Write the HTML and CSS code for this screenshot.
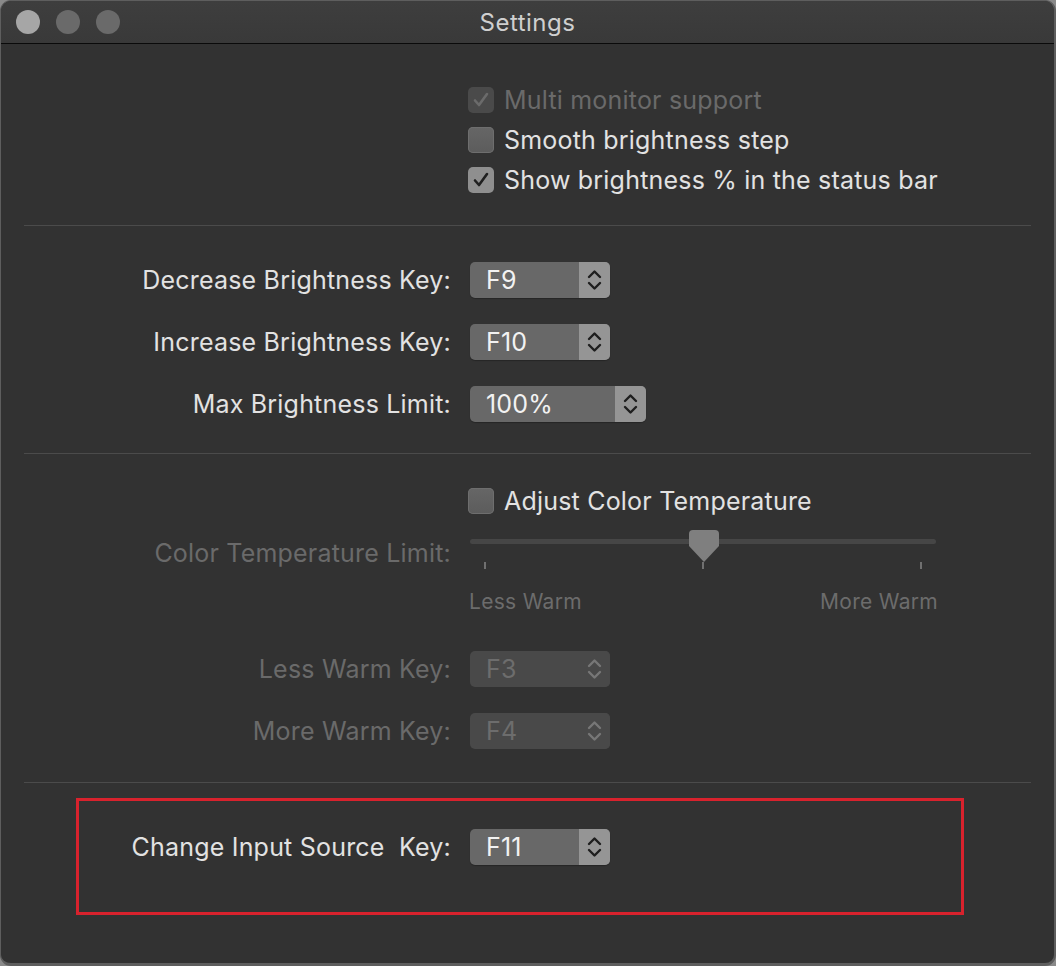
FILE: index.html
```html
<!DOCTYPE html>
<html>
<head>
<meta charset="utf-8">
<link rel="stylesheet" href="styles.css">
</head>
<body>
<div class="window">
  <div class="titlebar">
    <div class="lights">
      <span class="light light-close"></span>
      <span class="light"></span>
      <span class="light"></span>
    </div>
    <div class="title">Settings</div>
  </div>

  <div class="section sec-checks">
    <div class="check-row disabled"><span class="cb cb-on"><svg viewBox="0 0 26 26"><path d="M7 13.5l4 4.5 8-11"/></svg></span><span class="cb-label">Multi monitor support</span></div>
    <div class="check-row"><span class="cb"></span><span class="cb-label">Smooth brightness step</span></div>
    <div class="check-row"><span class="cb cb-on"><svg viewBox="0 0 26 26"><path d="M7 13.5l4 4.5 8-11"/></svg></span><span class="cb-label">Show brightness % in the status bar</span></div>
  </div>
  <div class="sep"></div>

  <div class="section sec-keys">
    <div class="row"><span class="label">Decrease Brightness Key:</span>
      <span class="popup"><span class="popup-val">F9</span><span class="popup-arrows"><svg viewBox="0 0 31 36"><path d="M10 15l5.5-5.5 5.5 5.5M10 21l5.5 5.5 5.5-5.5"/></svg></span></span></div>
    <div class="row"><span class="label">Increase Brightness Key:</span>
      <span class="popup"><span class="popup-val">F10</span><span class="popup-arrows"><svg viewBox="0 0 31 36"><path d="M10 15l5.5-5.5 5.5 5.5M10 21l5.5 5.5 5.5-5.5"/></svg></span></span></div>
    <div class="row"><span class="label">Max Brightness Limit:</span>
      <span class="popup popup-wide"><span class="popup-val">100%</span><span class="popup-arrows"><svg viewBox="0 0 31 36"><path d="M10 15l5.5-5.5 5.5 5.5M10 21l5.5 5.5 5.5-5.5"/></svg></span></span></div>
  </div>
  <div class="sep"></div>

  <div class="section sec-temp">
    <div class="check-row"><span class="cb"></span><span class="cb-label">Adjust Color Temperature</span></div>
    <div class="slider-row">
      <span class="label label-dim slider-label">Color Temperature Limit:</span>
      <div class="slider">
        <div class="track"></div>
        <svg class="thumb" viewBox="0 0 30 32"><path d="M4 0h22a4 4 0 0 1 4 4v12l-15 16-15-16v-12a4 4 0 0 1 4-4z"/></svg>
        <div class="ticks"><span class="tick"></span><span class="tick"></span><span class="tick"></span></div>
        <div class="slider-caps"><span>Less Warm</span><span>More Warm</span></div>
      </div>
    </div>
    <div class="row"><span class="label label-dim">Less Warm Key:</span>
      <span class="popup popup-off"><span class="popup-val">F3</span><span class="popup-arrows"><svg viewBox="0 0 31 36"><path d="M10 15l5.5-5.5 5.5 5.5M10 21l5.5 5.5 5.5-5.5"/></svg></span></span></div>
    <div class="row"><span class="label label-dim">More Warm Key:</span>
      <span class="popup popup-off"><span class="popup-val">F4</span><span class="popup-arrows"><svg viewBox="0 0 31 36"><path d="M10 15l5.5-5.5 5.5 5.5M10 21l5.5 5.5 5.5-5.5"/></svg></span></span></div>
  </div>
  <div class="sep"></div>

  <div class="section sec-input">
    <div class="highlight">
      <div class="row row-hl"><span class="label label-hl">Change Input Source&nbsp; Key:</span>
        <span class="popup"><span class="popup-val">F11</span><span class="popup-arrows"><svg viewBox="0 0 31 36"><path d="M10 15l5.5-5.5 5.5 5.5M10 21l5.5 5.5 5.5-5.5"/></svg></span></span></div>
    </div>
  </div>
</div>
</body>
</html>
```

FILE: styles.css
```css
* { box-sizing: border-box; }
html, body {
  margin: 0;
  padding: 0;
  background: #8a8a8a;
}
body {
  width: 1056px;
  height: 966px;
  overflow: hidden;
  font-family: "Inter", "Liberation Sans", sans-serif;
  --col: 451px;
  --gap: 19px;
}
.window {
  width: 1056px;
  height: 966px;
  background: #323232;
  border: 1px solid #5e5e5e;
  border-right-width: 2px;
  border-bottom-width: 3px;
  border-radius: 11px;
  overflow: hidden;
  display: flex;
  flex-direction: column;
}
.titlebar {
  height: 43px;
  flex: none;
  position: relative;
  background: linear-gradient(#3e3e3e, #393939);
  border-bottom: 1px solid #0a0a0a;
  display: flex;
  align-items: center;
  justify-content: center;
}
.lights {
  position: absolute;
  left: 15px;
  top: 9px;
  display: flex;
  gap: 16px;
}
.light {
  width: 24px;
  height: 24px;
  border-radius: 50%;
  background: #6a6a6a;
}
.light-close { background: #a6a6a6; }
.title {
  color: #cfcfcf;
  font-size: 24px;
  letter-spacing: 0.5px;
  padding-top: 1px;
}
.sep {
  height: 1px;
  flex: none;
  margin: 0 23px 0 23px;
  background: #4b4b4b;
}
.section { flex: none; }
.sec-checks { padding: 36px 0 25px 0; }
.sec-keys { padding: 23px 0 18px 0; }
.sec-temp { padding: 27px 0 20px 0; }
.sec-input { padding: 15px 0 0 0; flex: 1; }

.check-row {
  height: 40px;
  display: flex;
  align-items: center;
  padding-left: 467px;
  gap: 10px;
  color: #e2e2e2;
  font-size: 25px;
  letter-spacing: 0.2px;
}
.cb {
  width: 26px;
  height: 26px;
  border-radius: 5px;
  background: linear-gradient(#666, #5c5c5c);
  box-shadow: inset 0 0 0 1px #6e6e6e;
  display: flex;
  flex: none;
}
.cb svg { width: 26px; height: 26px; }
.cb svg path { fill: none; stroke: #202020; stroke-width: 2.6; stroke-linecap: round; stroke-linejoin: round; }
.cb-on { background: #8f8f8f; box-shadow: none; }
.disabled { color: #6a6a6a; }
.disabled .cb-on { background: #4a4a4a; }
.disabled .cb svg path { stroke: #6b6b6b; }

.row {
  height: 62px;
  display: flex;
  align-items: center;
  gap: var(--gap);
}
.label {
  width: calc(var(--col) - 1px);
  flex: none;
  text-align: right;
  font-size: 25px;
  letter-spacing: 0.2px;
  color: #e2e2e2;
}
.label-dim { color: #6a6a6a; }
.popup {
  width: 140px;
  height: 36px;
  border-radius: 5px;
  background: #686868;
  display: flex;
  overflow: hidden;
  box-shadow: 0 1px 1px rgba(0,0,0,0.25);
}
.popup-wide { width: 176px; }
.popup-val {
  flex: 1;
  padding-left: 16px;
  font-size: 25px;
  letter-spacing: 0.2px;
  line-height: 36px;
  color: #f2f2f2;
}
.popup-arrows {
  width: 31px;
  flex: none;
  background: #959595;
  display: flex;
}
.popup-arrows svg { width: 31px; height: 36px; }
.popup-arrows path { fill: none; stroke: #1e1e1e; stroke-width: 2.4; stroke-linecap: round; stroke-linejoin: round; }
.popup-off { background: #494949; box-shadow: none; }
.popup-off .popup-val { color: #6d6d6d; }
.popup-off .popup-arrows { background: #494949; }
.popup-off .popup-arrows path { stroke: #777; }

.slider-row {
  height: 117px;
  display: flex;
  align-items: flex-start;
  gap: var(--gap);
}
.slider-label { padding-top: 17px; }
.slider {
  width: 467px;
  position: relative;
  height: 117px;
}
.track {
  position: absolute;
  left: 0;
  top: 18px;
  width: 466px;
  height: 5px;
  border-radius: 3px;
  background: #464646;
}
.thumb {
  position: absolute;
  left: 219px;
  top: 9px;
  width: 30px;
  height: 32px;
}
.thumb path { fill: #7f7f7f; }
.ticks {
  position: absolute;
  left: 14px;
  top: 41px;
  width: 438px;
  display: flex;
  justify-content: space-between;
}
.tick {
  width: 2px;
  height: 7px;
  background: #707070;
}
.slider-caps {
  position: absolute;
  left: -1px;
  top: 68px;
  width: 469px;
  display: flex;
  justify-content: space-between;
  font-size: 21px;
  letter-spacing: 0.3px;
  color: #6c6c6c;
}
.highlight {
  margin-left: 75px;
  width: 888px;
  height: 117px;
  border: 3px solid #d8222d;
  padding-top: 28px;
}
.row-hl { height: 36px; }
.label-hl { width: calc(var(--col) - 79px); }
```
